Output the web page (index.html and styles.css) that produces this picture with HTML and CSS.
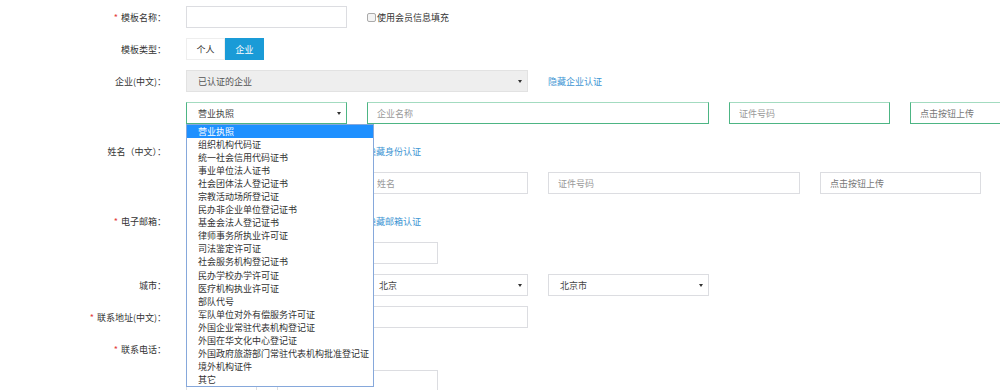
FILE: index.html
```html
<!DOCTYPE html>
<html lang="zh-CN">
<head>
  <meta charset="UTF-8">
  <meta name="viewport" content="width=device-width, initial-scale=1.0">
  <title>模板编辑</title>
  <link rel="stylesheet" href="styles.css">
</head>
<body>

  <div class="page">

    <div class="row">
      <label class="label"><i class="req">*</i>模板名称：</label>
      <div class="fields">
        <input class="field w-s" type="text">
        <label class="check"><span class="box"></span>使用会员信息填充</label>
      </div>
    </div>

    <div class="row">
      <label class="label">模板类型：</label>
      <div class="fields">
        <div class="toggle">
          <span>个人</span>
          <span class="on">企业</span>
        </div>
      </div>
    </div>

    <div class="row">
      <label class="label">企业(中文)：</label>
      <div class="fields">
        <div class="field select readonly w-m"><span>已认证的企业</span><i class="arrow"></i></div>
        <a class="link" href="#">隐藏企业认证</a>
      </div>
    </div>

    <div class="row gap">
      <label class="label"></label>
      <div class="fields">
        <div class="field select green w-s"><span>营业执照</span><i class="arrow"></i></div>
        <input class="field green w-m" type="text" placeholder="企业名称">
        <input class="field green w-s" type="text" placeholder="证件号码">
        <div class="field green upload w-s">点击按钮上传</div>
      </div>
    </div>

    <div class="row">
      <label class="label">姓名（中文）：</label>
      <div class="fields">
        <div class="field select w-s"><span></span><i class="arrow"></i></div>
        <a class="link" href="#">隐藏身份认证</a>
      </div>
    </div>

    <div class="row gap">
      <label class="label"></label>
      <div class="fields">
        <div class="field select w-s"><span></span><i class="arrow"></i></div>
        <input class="field w-s" type="text" placeholder="姓名">
        <input class="field w-l" type="text" placeholder="证件号码">
        <div class="field upload w-s">点击按钮上传</div>
      </div>
    </div>

    <div class="row">
      <label class="label"><i class="req">*</i>电子邮箱：</label>
      <div class="fields">
        <div class="field select w-s"><span></span><i class="arrow"></i></div>
        <a class="link" href="#">隐藏邮箱认证</a>
      </div>
    </div>

    <div class="row">
      <label class="label"></label>
      <div class="fields">
        <input class="field w-l" type="text">
      </div>
    </div>

    <div class="row">
      <label class="label">城市：</label>
      <div class="fields">
        <div class="field select w-s"><span></span><i class="arrow"></i></div>
        <div class="field select w-s"><span>北京</span><i class="arrow"></i></div>
        <div class="field select w-s"><span>北京市</span><i class="arrow"></i></div>
      </div>
    </div>

    <div class="row">
      <label class="label"><i class="req">*</i>联系地址(中文)：</label>
      <div class="fields">
        <input class="field w-m" type="text">
      </div>
    </div>

    <div class="row">
      <label class="label"><i class="req">*</i>联系电话：</label>
      <div class="fields">
        <div class="field select w-s"><span></span><i class="arrow"></i></div>
      </div>
    </div>

    <div class="row">
      <label class="label"></label>
      <div class="fields">
        <input class="field w-xs" type="text">
        <input class="field w-s" type="text">
      </div>
    </div>

    <ul class="dropdown">
      <li class="active">营业执照</li>
      <li>组织机构代码证</li>
      <li>统一社会信用代码证书</li>
      <li>事业单位法人证书</li>
      <li>社会团体法人登记证书</li>
      <li>宗教活动场所登记证</li>
      <li>民办非企业单位登记证书</li>
      <li>基金会法人登记证书</li>
      <li>律师事务所执业许可证</li>
      <li>司法鉴定许可证</li>
      <li>社会服务机构登记证书</li>
      <li>民办学校办学许可证</li>
      <li>医疗机构执业许可证</li>
      <li>部队代号</li>
      <li>军队单位对外有偿服务许可证</li>
      <li>外国企业常驻代表机构登记证</li>
      <li>外国在华文化中心登记证</li>
      <li>外国政府旅游部门常驻代表机构批准登记证</li>
      <li>境外机构证件</li>
      <li>其它</li>
    </ul>

  </div>

</body>
</html>
```

FILE: styles.css
```css
body {
  font-family: "Noto Sans CJK SC", "Noto Sans", sans-serif;
  font-size: 9px;
  color: #333;
  background-color: #fff;
  margin: 0;
  overflow: hidden;
}
.page {
  position: relative;
  padding-top: 6px;
}
.row {
  display: flex;
  align-items: center;
  height: 22px;
  margin-bottom: 10px;
}
.row.gap {
  margin-bottom: 16px;
}
.label {
  width: 166px;
  flex-shrink: 0;
  text-align: right;
}
.req {
  color: #e4393c;
  font-style: normal;
  margin-right: 3px;
}
.fields {
  display: flex;
  align-items: center;
  gap: 20px;
  margin-left: 20px;
  flex-shrink: 0;
}
.field {
  height: 22px;
  box-sizing: border-box;
  border: 1px solid #dcdde1;
  background: #fff;
  padding: 0 9px;
  font: inherit;
  color: #444;
  flex-shrink: 0;
  display: flex;
  align-items: center;
  outline: none;
}
input.field::placeholder {
  color: #999;
}
.select {
  justify-content: space-between;
  padding: 0 5px 0 11px;
}
.arrow {
  width: 0;
  height: 0;
  border-left: 2px solid transparent;
  border-right: 2px solid transparent;
  border-top: 3px solid #333;
}
.w-xs { width: 71px; }
.w-s { width: 161px; }
.w-l { width: 252px; }
.w-m { width: 342px; }
.green {
  border-color: #4db584;
  border-top-color: #a3dbc0;
}
.readonly {
  background: #eee;
  color: #555;
  border-color: #e2e2e2;
}
.upload {
  color: #777;
}
.toggle {
  display: flex;
}
.toggle span {
  width: 39px;
  height: 22px;
  box-sizing: border-box;
  display: flex;
  align-items: center;
  justify-content: center;
  border: 1px solid #eee;
}
.toggle .on {
  background: #1a9bd7;
  border-color: #1a9bd7;
  color: #fff;
}
.check {
  display: flex;
  align-items: center;
}
.check .box {
  width: 7px;
  height: 7px;
  border: 1px solid #aaa;
  border-radius: 2px;
  background: #f4f4f4;
  margin-right: 1px;
}
.link {
  color: #3d95d3;
  text-decoration: none;
}
.dropdown {
  position: absolute;
  left: 186px;
  top: 124px;
  width: 188px;
  box-sizing: border-box;
  margin: 0;
  padding: 0;
  list-style: none;
  background: #fff;
  border: 1px solid #86a8db;
}
.dropdown li {
  height: 13.05px;
  line-height: 13.05px;
  padding-left: 11px;
  white-space: nowrap;
}
.dropdown li.active {
  background: #1e90ff;
  color: #fff;
}
```
